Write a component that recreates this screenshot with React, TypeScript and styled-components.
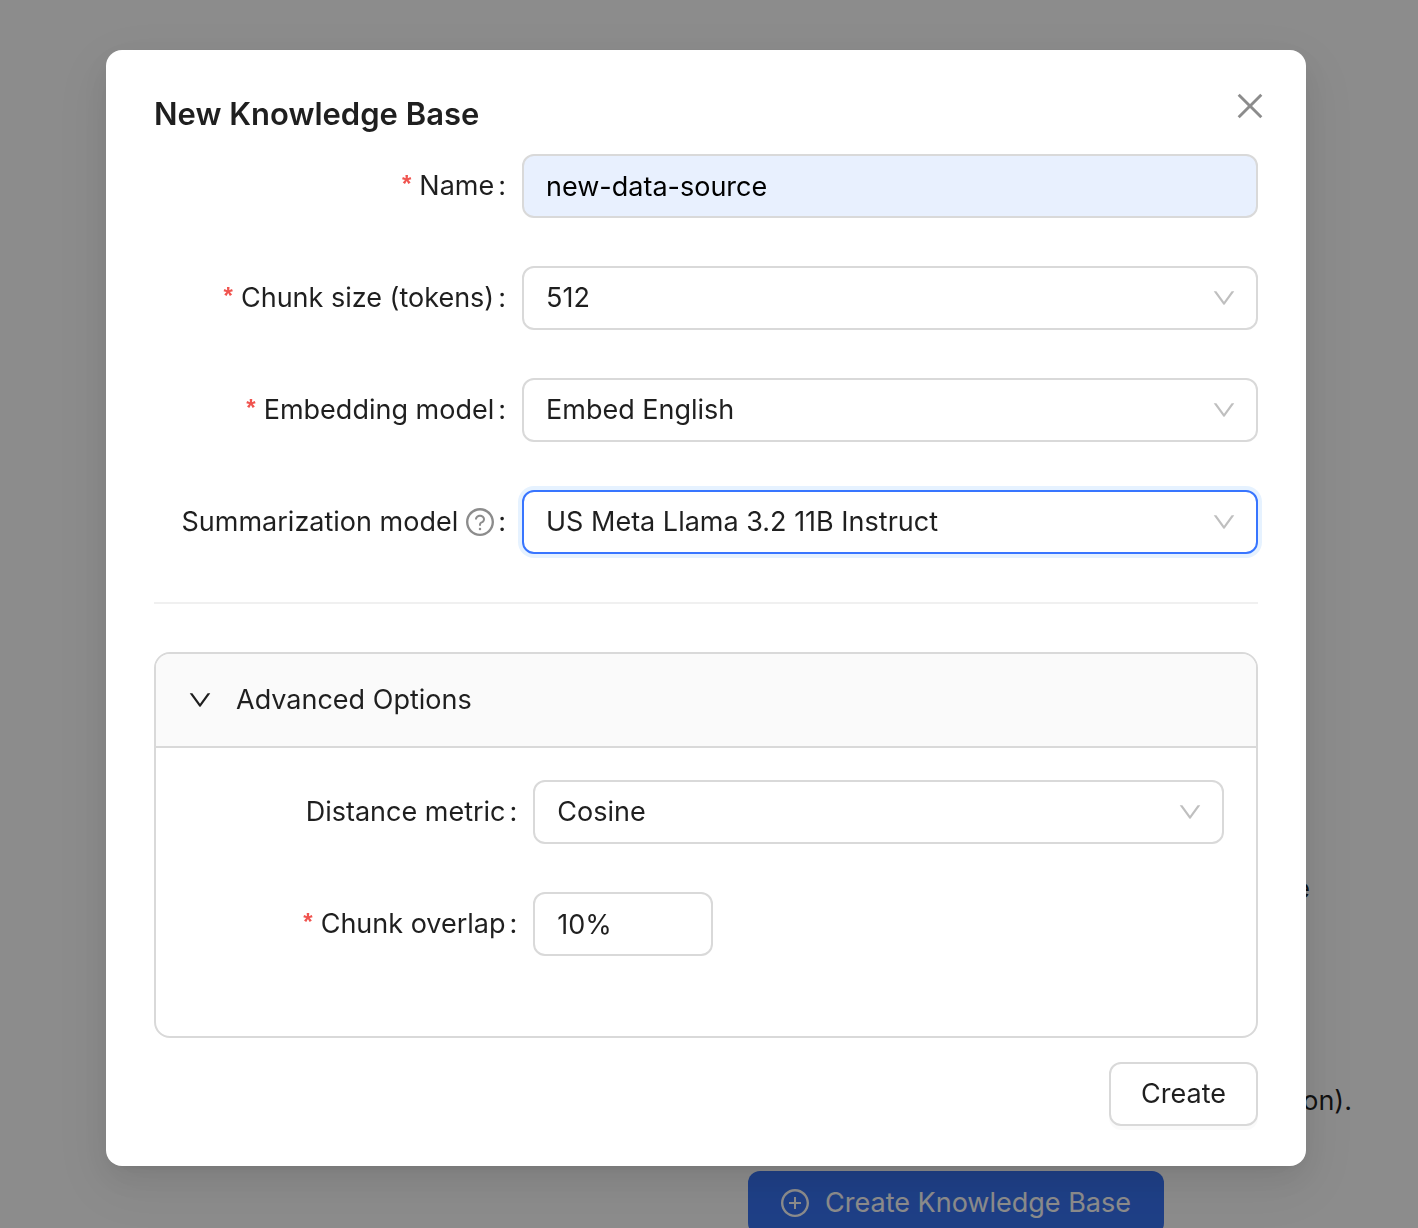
import React, { useState } from "react";
import styled, { createGlobalStyle } from "styled-components";
import {
  AiOutlineDown,
  AiOutlinePlusCircle,
  AiOutlineQuestionCircle,
} from "react-icons/ai";

const ICON_BOX = "64 64 896 896";

const GlobalStyle = createGlobalStyle`
  *, *::before, *::after { box-sizing: border-box; }
  body {
    margin: 0;
    overflow: hidden;
    background: #fff;
    color: rgba(0, 0, 0, 0.88);
    font-family: Inter, "Liberation Sans", sans-serif;
    font-size: 27px;
    line-height: 44px;
  }
  button, input, select { font: inherit; color: inherit; margin: 0; }
`;

const Page = styled.main`
  display: flex;
  flex-direction: column;
  align-items: flex-end;
  height: 100vh;
  overflow: hidden;
  padding: 867px 66px 0 0;
`;

const Note = styled.p<{ $inset?: number; $after: number }>`
  margin: 0 ${(p) => p.$inset ?? 0}px ${(p) => p.$after}px 0;
  flex-shrink: 0;
`;

const PrimaryButton = styled.button`
  display: flex;
  flex-shrink: 0;
  align-items: center;
  justify-content: center;
  gap: 16px;
  width: 416px;
  height: 64px;
  margin-right: 188px;
  border: 0;
  border-radius: 12px;
  background: #3874f5;
  color: #fff;
  white-space: nowrap;
`;

const Mask = styled.div`
  position: fixed;
  inset: 0;
  display: flex;
  align-items: flex-start;
  justify-content: center;
  padding: 50px 112px 50px 106px;
  background: rgba(0, 0, 0, 0.45);
`;

const Dialog = styled.section`
  position: relative;
  width: 100%;
  max-width: 1200px;
  padding: 40px 48px;
  border-radius: 16px;
  background: #fff;
  box-shadow:
    0 12px 32px 0 rgba(0, 0, 0, 0.08),
    0 6px 12px -8px rgba(0, 0, 0, 0.12),
    0 18px 56px 16px rgba(0, 0, 0, 0.05);
`;

const Title = styled.h1`
  margin: 0 0 16px;
  font-size: 31px;
  font-weight: 600;
  line-height: 48px;
`;

const CloseButton = styled.button`
  position: absolute;
  top: 24px;
  right: 24px;
  display: grid;
  place-items: center;
  width: 64px;
  height: 64px;
  padding: 0;
  border: 0;
  background: none;
  color: rgba(0, 0, 0, 0.45);
`;

const Row = styled.div`
  display: grid;
  grid-template-columns: 1fr 2fr;
  align-items: center;
  margin-bottom: 48px;
`;

const LabelCell = styled.div`
  display: flex;
  align-items: center;
  justify-content: flex-end;
  padding-right: 16px;
  white-space: nowrap;
`;

const Star = styled.span`
  align-self: flex-start;
  margin-right: 8px;
  color: #f0544f;
  font-family: "Liberation Sans", sans-serif;
  font-size: 24px;
  font-weight: 700;
  line-height: 40px;
`;

const Help = styled.span`
  display: flex;
  margin-left: 8px;
  color: rgba(0, 0, 0, 0.45);
`;

const Colon = styled.span`
  margin-left: 4px;
`;

const controlBox = `
  width: 100%;
  height: 64px;
  padding: 0 22px;
  border: 2px solid #d9d9d9;
  border-radius: 12px;
  outline: none;
  background: #fff;
`;

const TextInput = styled.input<{ $filled?: boolean; $short?: boolean }>`
  ${controlBox}
  ${(p) => p.$filled && "background: #e8f0fe; color: #000;"}
  ${(p) => p.$short && "max-width: 180px;"}
`;

const SelectBox = styled.div`
  display: grid;
  align-items: center;
  & > * { grid-area: 1 / 1; }
  & > svg {
    justify-self: end;
    margin-right: 22px;
    color: rgba(0, 0, 0, 0.25);
    pointer-events: none;
  }
`;

const SelectInput = styled.select<{ $active?: boolean }>`
  ${controlBox}
  appearance: none;
  ${(p) =>
    p.$active &&
    "border-color: #3875ff; box-shadow: 0 0 0 4px rgba(5, 125, 255, 0.1);"}
`;

const Divider = styled.hr`
  height: 2px;
  margin: 0 0 48px;
  border: 0;
  background: rgba(5, 5, 5, 0.06);
`;

const Panel = styled.div`
  overflow: hidden;
  border: 2px solid #d9d9d9;
  border-radius: 16px;
`;

const PanelHeader = styled.button`
  display: flex;
  align-items: center;
  gap: 24px;
  width: 100%;
  padding: 24px 32px;
  border: 0;
  background: #fafafa;
  text-align: left;
`;

const PanelBody = styled.div`
  padding: 32px;
  border-top: 2px solid #d9d9d9;
`;

const Footer = styled.footer`
  display: flex;
  justify-content: flex-end;
  margin-top: 24px;
`;

const CreateButton = styled.button`
  height: 64px;
  padding: 0 30px;
  border: 2px solid #d9d9d9;
  border-radius: 12px;
  background: #fff;
  box-shadow: 0 4px 0 rgba(0, 0, 0, 0.02);
`;

function CloseIcon() {
  return (
    <svg width="32" height="32" viewBox={ICON_BOX} fill="currentColor" aria-hidden="true">
      <path d="M799.9 166.3 857.7 224.1 569.9 512l287.8 287.9-57.8 57.8L512 569.9 224.1 857.7l-57.8-57.8L454.1 512 166.3 224.1l57.8-57.8L512 454.1z" />
    </svg>
  );
}

type FieldProps = {
  id: string;
  label: string;
  required?: boolean;
  help?: boolean;
  children: React.ReactNode;
};

function Field({ id, label, required, help, children }: FieldProps) {
  return (
    <Row>
      <LabelCell>
        {required && <Star aria-hidden="true">*</Star>}
        <label htmlFor={id}>{label}</label>
        {help && (
          <Help>
            <AiOutlineQuestionCircle size={28} viewBox={ICON_BOX} />
          </Help>
        )}
        <Colon>:</Colon>
      </LabelCell>
      {children}
    </Row>
  );
}

function Select({ id, value, active }: { id: string; value: string; active?: boolean }) {
  return (
    <SelectBox>
      <SelectInput id={id} $active={active}>
        <option>{value}</option>
      </SelectInput>
      <AiOutlineDown size={24} viewBox={ICON_BOX} />
    </SelectBox>
  );
}

export default function App() {
  const [open, setOpen] = useState(true);
  return (
    <>
      <GlobalStyle />
      <Page>
        <Note $inset={42} $after={168}>e</Note>
        <Note $after={48}>on).</Note>
        <PrimaryButton type="button">
          <AiOutlinePlusCircle size={28} viewBox={ICON_BOX} />
          Create Knowledge Base
        </PrimaryButton>
      </Page>
      <Mask>
        <Dialog role="dialog" aria-modal="true" aria-labelledby="dialog-title">
          <Title id="dialog-title">New Knowledge Base</Title>
          <CloseButton type="button" aria-label="Close">
            <CloseIcon />
          </CloseButton>
          <form onSubmit={(e) => e.preventDefault()}>
            <Field id="name" label="Name" required>
              <TextInput id="name" defaultValue="new-data-source" $filled />
            </Field>
            <Field id="chunk-size" label="Chunk size (tokens)" required>
              <Select id="chunk-size" value="512" />
            </Field>
            <Field id="embedding" label="Embedding model" required>
              <Select id="embedding" value="Embed English" />
            </Field>
            <Field id="summarization" label="Summarization model" help>
              <Select id="summarization" value="US Meta Llama 3.2 11B Instruct" active />
            </Field>
            <Divider />
            <Panel>
              <PanelHeader type="button" aria-expanded={open} onClick={() => setOpen(!open)}>
                <AiOutlineDown size={24} viewBox={ICON_BOX} />
                Advanced Options
              </PanelHeader>
              {open && (
                <PanelBody>
                  <Field id="distance" label="Distance metric">
                    <Select id="distance" value="Cosine" />
                  </Field>
                  <Field id="overlap" label="Chunk overlap" required>
                    <TextInput id="overlap" defaultValue="10%" $short />
                  </Field>
                </PanelBody>
              )}
            </Panel>
            <Footer>
              <CreateButton type="submit">Create</CreateButton>
            </Footer>
          </form>
        </Dialog>
      </Mask>
    </>
  );
}
